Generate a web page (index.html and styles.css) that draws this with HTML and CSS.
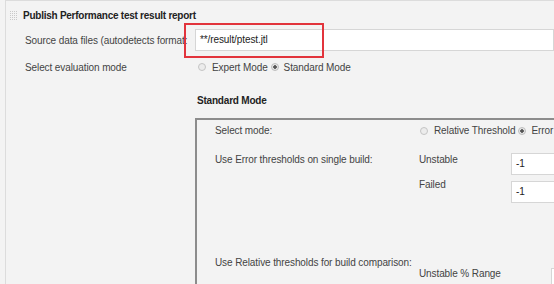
FILE: index.html
```html
<!DOCTYPE html>
<html lang="en">
<head>
    <meta charset="UTF-8">
    <meta name="viewport" content="width=device-width, initial-scale=1.0">
    <title>Publish Performance test result report</title>
    <link rel="stylesheet" href="styles.css">
</head>
<body>

    <!-- Sekcja kroku po buildzie -->
    <div class="section">
        <div class="section-head">
            <span class="grip"></span>
            <span class="section-title">Publish Performance test result report</span>
        </div>

        <div class="row row-source">
            <div class="label">Source data files (autodetects format:</div>
            <div class="field">
                <div class="text-box">**/result/ptest.jtl</div>
                <span class="mark"></span>
            </div>
        </div>

        <div class="row row-mode">
            <div class="label">Select evaluation mode</div>
            <div class="field radios">
                <span class="radio"></span><span class="radio-text">Expert Mode</span>
                <span class="radio on"></span><span class="radio-text">Standard Mode</span>
            </div>
        </div>

        <div class="sub-title">Standard Mode</div>

        <!-- Ramka trybu standardowego -->
        <div class="mode-box">
            <div class="box-row box-select">
                <div class="box-label">Select mode:</div>
                <div class="radios">
                    <span class="radio"></span><span class="radio-text">Relative Threshold</span>
                    <span class="radio on"></span><span class="radio-text">Error Threshold</span>
                </div>
            </div>
            <div class="box-row box-unstable">
                <div class="box-label">Use Error thresholds on single build:</div>
                <div class="box-name">Unstable</div>
                <div class="text-box small">-1</div>
            </div>
            <div class="box-row box-failed">
                <div class="box-label"></div>
                <div class="box-name">Failed</div>
                <div class="text-box small">-1</div>
            </div>
            <div class="box-row box-relative">
                <div class="box-label wide">Use Relative thresholds for build comparison:</div>
            </div>
            <div class="box-row box-range">
                <div class="box-label"></div>
                <div class="box-name range">Unstable % Range</div>
                <div class="text-box small"></div>
            </div>
        </div>
    </div>

</body>
</html>
```

FILE: styles.css
```css
body {
    margin: 0;
    background-color: #f3f3f3;
    font-family: "Liberation Sans", Arial, sans-serif;
    font-size: 10px;
    letter-spacing: -0.1px;
    color: #444;
    overflow: hidden;
    height: 284px;
}

.section {
    margin-left: 5px;
    border-left: 1px solid #dcdcdc;
    border-top: 1px solid #dcdcdc;
    height: 100%;
    white-space: nowrap;
}

.section-head {
    display: flex;
    align-items: center;
    height: 14px;
    margin-top: 7px;
    padding-left: 3px;
}

/* kropkowany uchwyt */
.grip {
    width: 8px;
    height: 11px;
    margin-right: 6px;
    background-image:
        linear-gradient(to right, #f3f3f3 1px, transparent 1px),
        linear-gradient(to bottom, #f3f3f3 1px, #c9c9c9 1px);
    background-size: 2px 2px;
}

.section-title {
    font-weight: bold;
    letter-spacing: -0.25px;
    color: #222;
}

.row {
    display: flex;
    align-items: center;
    padding-left: 19px;
}

.label {
    width: 170px;
    flex-shrink: 0;
}

.field {
    position: relative;
    flex: 1;
}

.row-source {
    margin-top: 7px;
}

.text-box {
    height: 20px;
    line-height: 20px;
    background-color: #fff;
    border: 1px solid #d6d6d6;
    padding-left: 4px;
    color: #222;
}

/* czerwona ramka zaznaczenia */
.mark {
    position: absolute;
    left: -11px;
    top: -6px;
    width: 136px;
    height: 31px;
    border: 2px solid #e2343c;
}

.row-mode {
    margin-top: 6px;
    height: 20px;
}

.radios {
    display: flex;
    align-items: center;
    padding-left: 3px;
}

.radio {
    width: 6px;
    height: 6px;
    border: 1px solid #c4c4c4;
    border-radius: 50%;
    background-color: #ececec;
    margin-right: 6px;
}

.radio.on {
    background: radial-gradient(circle, #555 1.5px, #e6e6e6 2px);
    border-color: #bdbdbd;
    margin-left: 3px;
    margin-right: 5px;
}

.sub-title {
    font-weight: bold;
    letter-spacing: -0.2px;
    color: #222;
    margin: 17px 0 0 191px;
    line-height: 14px;
}

.mode-box {
    margin: 10px 0 0 189px;
    width: 420px;
    height: 200px;
    border-top: 2px solid #8c8c8c;
    border-left: 2px solid #8c8c8c;
    padding-left: 18px;
}

.box-row {
    display: flex;
    align-items: flex-start;
    line-height: 12px;
}

.box-label {
    width: 204px;
    flex-shrink: 0;
}

.box-label.wide {
    width: auto;
}

.box-name {
    width: 92px;
    flex-shrink: 0;
}

.text-box.small {
    width: 60px;
    line-height: 20px;
}

.box-select {
    height: 20px;
    align-items: center;
    margin-top: 1px;
}

.box-select .radios {
    padding-left: 1px;
}

.box-unstable {
    margin-top: 10px;
}

.box-unstable .box-label,
.box-unstable .box-name {
    padding-top: 3px;
}

.box-unstable .text-box {
    margin-top: 2px;
}

.box-failed {
    margin-top: 4px;
}

.box-failed .text-box {
    margin-top: 2px;
}

.box-relative {
    margin-top: 54px;
    height: 11px;
}

.box-range .box-name {
    width: 132px;
}
```
